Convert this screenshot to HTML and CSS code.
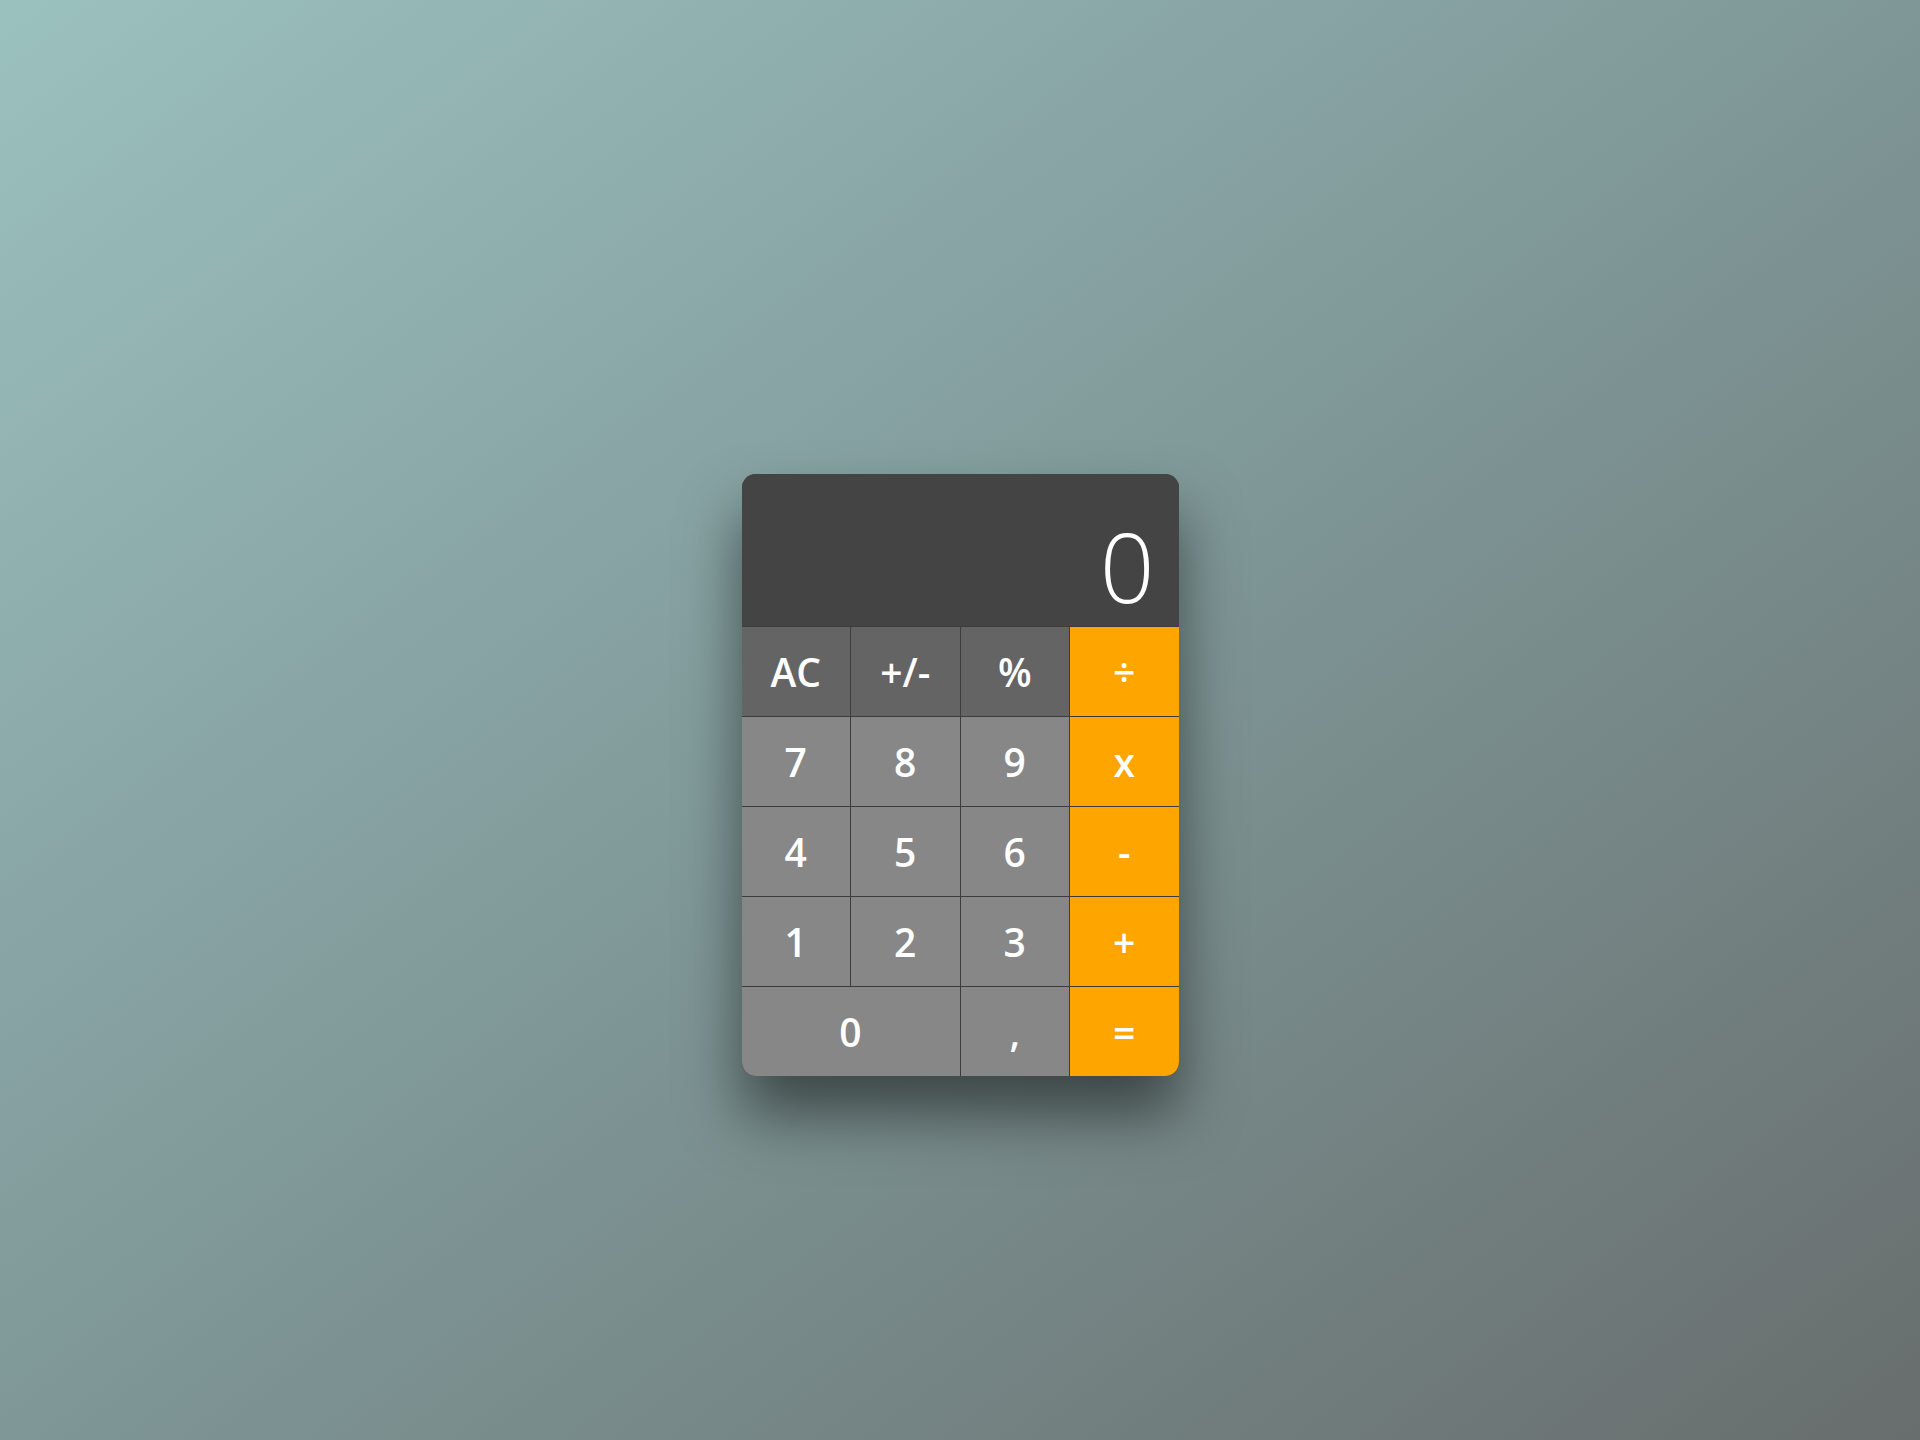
FILE: index.html
```html
<!DOCTYPE html>
<html lang="en">
<head>
<meta charset="utf-8">
<title>Calculator</title>
<link rel="stylesheet" href="styles.css">
</head>
<body>
  <main class="calculator">
    <div class="display">0</div>
    <div class="keys">
      <button class="key fn">AC</button>
      <button class="key fn">+/-</button>
      <button class="key fn">%</button>
      <button class="key op">÷</button>
      <button class="key">7</button>
      <button class="key">8</button>
      <button class="key">9</button>
      <button class="key op">x</button>
      <button class="key">4</button>
      <button class="key">5</button>
      <button class="key">6</button>
      <button class="key op">-</button>
      <button class="key">1</button>
      <button class="key">2</button>
      <button class="key">3</button>
      <button class="key op">+</button>
      <button class="key zero">0</button>
      <button class="key">,</button>
      <button class="key op">=</button>
    </div>
  </main>
</body>
</html>
```

FILE: styles.css
```css
html, body {
  margin: 0;
  padding: 0;
  height: 100%;
}

body {
  background: linear-gradient(to bottom right, #9bc1bf 0%, #7f9797 50%, #686d6d 100%);
  font-family: "Open Sans", "Noto Sans", sans-serif;
  display: flex;
  justify-content: center;
  align-items: flex-start;
}

.calculator {
  margin-top: 474px;
  width: 437px;
  border-radius: 14px;
  overflow: hidden;
  background: #444444;
  box-shadow: 0 38px 60px rgba(0, 0, 0, 0.5);
}

.display {
  height: 152px;
  box-sizing: border-box;
  background: #444444;
  color: #ffffff;
  font-weight: 300;
  font-size: 96px;
  line-height: 1;
  display: flex;
  align-items: flex-end;
  justify-content: flex-end;
  padding: 0 24px 12px 0;
}

.keys {
  display: grid;
  grid-template-columns: repeat(4, 1fr);
  grid-auto-rows: 89px;
  gap: 1px;
  padding-top: 1px;
  background: #3c3c3c;
}

.key {
  border: 0;
  margin: 0;
  padding: 0;
  background: #878787;
  color: #ffffff;
  font-family: "Open Sans", "Noto Sans", sans-serif;
  font-size: 39px;
  font-weight: 600;
  display: flex;
  align-items: center;
  justify-content: center;
}

.key.fn {
  background: #646464;
}

.key.op {
  background: #ffa500;
}

.key.zero {
  grid-column: span 2;
}
```
